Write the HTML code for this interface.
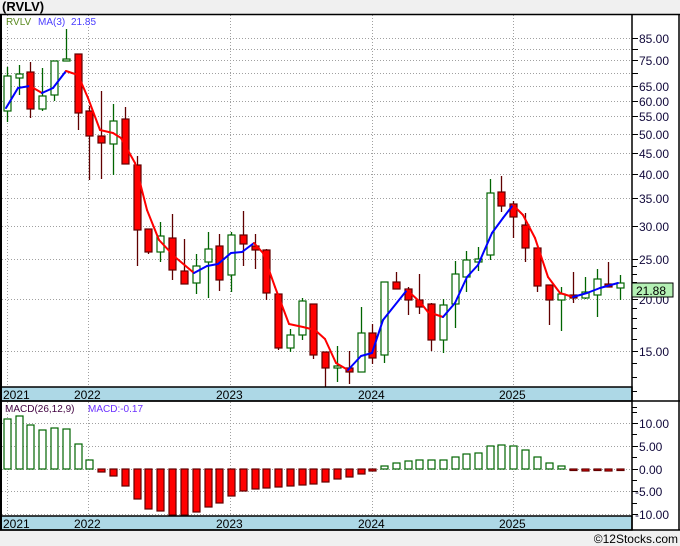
<!DOCTYPE html>
<html><head><meta charset="utf-8"><style>
html,body{margin:0;padding:0;background:#fff;}
svg{display:block;font-family:"Liberation Sans","DejaVu Sans",sans-serif;}
</style></head><body>
<svg id="s" width="680" height="546" viewBox="0 0 680 546" xmlns="http://www.w3.org/2000/svg">
<rect x="0" y="0" width="680" height="546" fill="#f0f0f0"/>
<rect x="0" y="14" width="680" height="516" fill="#fff"/>
<text x="2" y="11" font-size="13" font-weight="bold" fill="#000">(RVLV)</text>
<g id="grid" stroke="#a0a0a0" stroke-width="1" stroke-dasharray="1,2"></g>
<g id="ticks" stroke="#000" stroke-width="1"></g>
<g id="candles"></g>
<g id="ma" stroke-width="2" fill="none" stroke-linecap="round"></g>
<g id="macd"></g>
<!-- date bands -->
<rect x="0" y="387" width="632" height="14" fill="#add8e6" stroke="#000" stroke-width="1.5"/>
<rect x="0" y="516" width="632" height="14" fill="#add8e6" stroke="#000" stroke-width="1.5"/>
<g font-size="12" fill="#000">
<text x="3" y="399">2021</text><text x="74" y="399">2022</text><text x="216" y="399">2023</text><text x="358" y="399">2024</text><text x="499" y="399">2025</text>
<text x="3" y="528">2021</text><text x="74" y="528">2022</text><text x="216" y="528">2023</text><text x="358" y="528">2024</text><text x="499" y="528">2025</text>
</g>
<!-- frame lines -->
<line x1="0" y1="14.5" x2="680" y2="14.5" stroke="#000" stroke-width="1.5"/>
<line x1="1" y1="14" x2="1" y2="530" stroke="#000" stroke-width="2"/>
<line x1="632" y1="14" x2="632" y2="530" stroke="#000" stroke-width="1.5"/>
<line x1="679" y1="14" x2="679" y2="530" stroke="#000" stroke-width="1.5"/>
<line x1="0" y1="401" x2="680" y2="401" stroke="#000" stroke-width="1.5"/>
<line x1="0" y1="530" x2="680" y2="530" stroke="#000" stroke-width="1.5"/>
<g id="labels" font-size="12" fill="#10083a"></g>
<rect x="632" y="283" width="41" height="14" fill="#b4f0b4" stroke="#000" stroke-width="1"/>
<text x="636" y="295" font-size="12" fill="#000">21.88</text>
<text x="6" y="25" font-size="10" fill="#5a8a20">RVLV</text>
<text x="38" y="25" font-size="10" fill="#4a3cff">MA(3)</text>
<text x="71" y="25" font-size="10" fill="#4a3cff">21.85</text>
<text x="5" y="412" font-size="10" fill="#400040">MACD(26,12,9)</text>
<text x="88" y="412" font-size="10" fill="#6a30ff">MACD:-0.17</text>
<text x="678" y="543" font-size="12" fill="#000" text-anchor="end">©12Stocks.com</text>
</svg>
<script>
var NS="http://www.w3.org/2000/svg";
function el(p,t,a){var e=document.createElementNS(NS,t);for(var k in a)e.setAttribute(k,a[k]);document.getElementById(p).appendChild(e);return e;}
function Y(p){return 351-180.5*Math.log(p/15);}
// grid
[85,80,75,70,65,60,55,50,45,40,35,30,25,20,15].forEach(function(p){var y=Math.round(Y(p))+0.5;el("grid","line",{x1:2,y1:y,x2:632,y2:y});el("ticks","line",{x1:632,y1:y,x2:638,y2:y});});
[7,88,230,372,513].forEach(function(x){el("grid","line",{x1:x+0.5,y1:15,x2:x+0.5,y2:387});el("grid","line",{x1:x+0.5,y1:402,x2:x+0.5,y2:516});});
[11,12,13,14,16,17,18,19,21,22,23,24].forEach(function(p){var y=Math.round(Y(p))+0.5;el("ticks","line",{x1:632,y1:y,x2:637,y2:y});});
[[10,423],[5,446],[0,469],[-5,491],[-10,514]].forEach(function(a){var y=a[1]+0.5;el("grid","line",{x1:2,y1:y,x2:632,y2:y});el("ticks","line",{x1:632,y1:y,x2:638,y2:y});});
[412,434,457,480,503].forEach(function(y){el("ticks","line",{x1:632,y1:y+0.5,x2:637,y2:y+0.5});});
var labs=[["85.00",85],["75.00",75],["65.00",65],["60.00",60],["55.00",55],["50.00",50],["45.00",45],["40.00",40],["35.00",35],["30.00",30],["25.00",25],["20.00",20],["15.00",15]];
labs.forEach(function(l){var t=el("labels","text",{x:639,y:Math.round(Y(l[1]))+5});t.textContent=l[0];});
[["10.00",423],["5.00",446],["0.00",469],["-5.00",491],["-10.00",514]].forEach(function(l){var t=el("labels","text",{x:l[0].length>5?635:639,y:l[1]+5});if(l[0]=="-5.00")t.setAttribute("x",635);t.textContent=l[0];});
// candles: x, high, low, bodyTop, bodyBot, up
var C=[[7,67,122,76,111,1],[18.5,65,95,74,78,1],[30,62,118,72,109,0],[42,68,111,96,109,1],[54,61,101,61,95,1],[66,29,61,59,61,1],[78,54,130,54,113,0],[89,106,180,111,136,0],[101,91,179,136,143,0],[113,104,175,121,144,1],[125,107,164,119,164,0],[137,156,266,165,230,0],[148,229,254,229,252,0],[160,222,262,236,252,1],[172,214,280,238,270,0],[184,239,284,271,284,0],[196,254,294,266,283,1],[208,232,298,249,262,1],[219,234,291,246,280,0],[231,232,292,235,275,1],[243,211,266,235,244,0],[255,234,269,246,250,0],[266,249,300,250,293,0],[278,294,350,294,348,0],[290,329,352,335,348,1],[302,298,340,301,335,1],[313,304,359,304,355,0],[325,352,387,352,368,0],[337,346,382,366,368,1],[349,351,384,368,372,0],[361,307,372,333,372,1],[372,324,364,333,358,0],[384,282,363,282,355,1],[396,272,289,282,289,0],[408,287,315,289,300,0],[419,274,314,300,307,0],[431,303,351,304,340,0],[443,299,353,305,340,1],[455,261,328,274,304,1],[466,251,292,260,277,1],[478,247,271,259,262,1],[490,179,260,193,255,1],[501,176,212,192,206,0],[513,201,238,204,217,0],[525,213,262,225,248,0],[537,248,292,248,286,0],[549,285,325,285,300,0],[561,287,331,294,300,1],[573,272,303,295,298,0],[585,277,299,292,298,1],[597,269,317,279,295,1],[608,262,287,284,287,0],[620,275,300,283,288,1]];
C.forEach(function(c){var x=Math.round(c[0]);var col=c[5]?"#006400":"#600000";
el("candles","line",{x1:x+0.5,y1:c[1],x2:x+0.5,y2:c[2],stroke:col,"stroke-width":1.3});
el("candles","rect",{x:x-3,y:c[3],width:7,height:Math.max(c[4]-c[3],1.5),fill:c[5]?"#fff":"#ff0000",stroke:col,"stroke-width":1.2});});
// MA
var M=[[6,108],[18,88],[30,86],[42,93],[53,88],[66,71],[78,75],[88,98],[100,130],[113,133],[121,138],[135,163],[147,210],[159,240],[175,257],[194,273],[207,266],[218,264],[231,253],[242,252],[254,243],[263,253],[275,287],[289,324],[303,327],[315,330],[325,339],[336,363],[348,370],[361,356],[372,353],[383,320],[407,290],[420,302],[428,312],[443,317],[455,303],[467,277],[478,265],[492,233],[503,218],[513,205],[523,215],[535,238],[548,277],[560,293],[573,297],[587,293],[600,288],[618,283]];
for(var i=1;i<M.length;i++){el("ma","line",{x1:M[i-1][0],y1:M[i-1][1],x2:M[i][0],y2:M[i][1],stroke:M[i][1]<M[i-1][1]?"#0000ff":"#ff0000"});}
// MACD bars: x, y (top if >0, bottom if <0)
var B=[[7,419],[18.5,416],[30,425],[42,430],[54,428],[66,429],[78,444],[89,460],[101,472],[113,476],[125,486],[137,499],[148,509],[160,511],[172,515],[184,515],[196,512],[208,507],[219,503],[231,496],[243,491],[255,489],[266,488],[278,487],[290,486],[302,485],[313,484],[325,482],[337,479],[349,477],[361,474],[372,471],[384,466],[396,463],[408,461],[419,460],[431,460],[443,460],[455,457],[466,454],[478,453],[490,446],[501,445],[513,446],[525,450],[537,457],[549,463],[561,466],[573,470.5],[585,471],[597,470.5],[608,471],[620,470.5]];
B.forEach(function(b){var x=Math.round(b[0]);var z=469;var up=b[1]<z;
el("macd","rect",{x:x-3,y:up?b[1]:z,width:7,height:Math.abs(b[1]-z),fill:up?"#fff":"#ff0000",stroke:up?"#006400":"#600000","stroke-width":1.2});});
</script>
</body></html>
